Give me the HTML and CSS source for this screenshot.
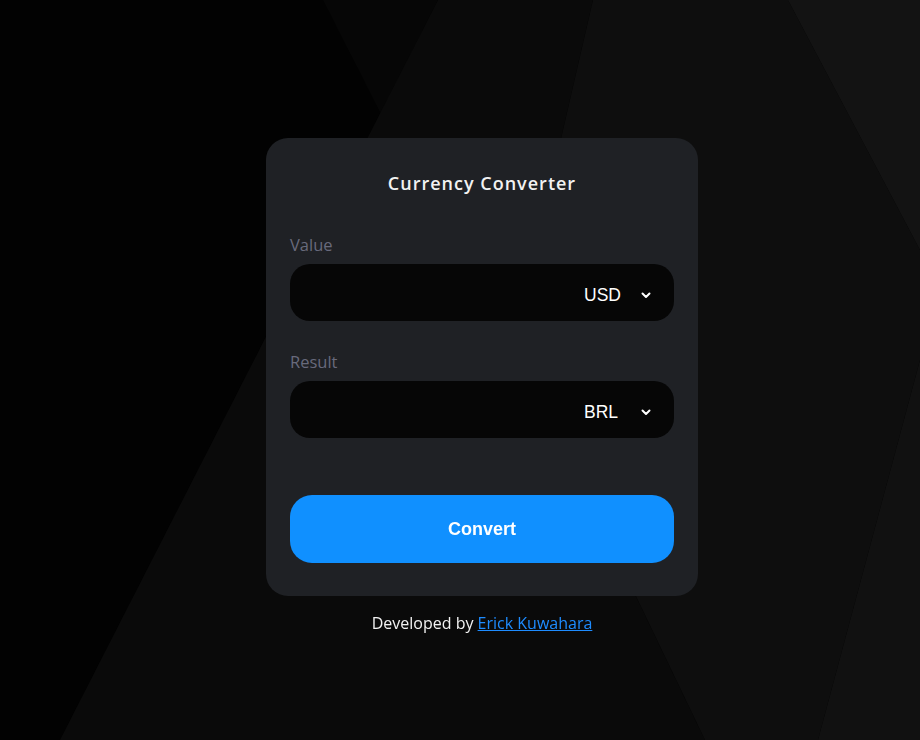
FILE: index.html
```html
<!DOCTYPE html>
<html lang="en">
<head>
<meta charset="utf-8">
<title>Currency Converter</title>
<link rel="stylesheet" href="styles.css">
</head>
<body>
<svg class="backdrop" width="920" height="740" viewBox="0 0 920 740" preserveAspectRatio="none" aria-hidden="true">
  <rect x="0" y="0" width="920" height="740" fill="#020202"/>
  <polygon points="323,0 438,0 381,114" fill="#060606"/>
  <polygon points="438,0 593,0 514,342 705,740 60,740" fill="#0a0a0a"/>
  <polygon points="593,0 788,0 920,250 920,360 818,740 705,740 514,342" fill="#0e0e0e"/>
  <polygon points="788,0 920,0 920,250" fill="#131313"/>
  <polygon points="920,360 920,740 818,740" fill="#111111"/>
</svg>
<main class="page">
  <form class="card">
    <h1 class="title">Currency Converter</h1>
    <label class="label">Value</label>
    <div class="field">
      <input class="amount" type="text">
      <span class="currency">USD</span>
      <svg class="chevron" width="10" height="7" viewBox="0 0 10 7"><path d="M1.5 1.5 L5 5 L8.5 1.5" fill="none" stroke="#fff" stroke-width="2" stroke-linecap="round" stroke-linejoin="round"/></svg>
    </div>
    <label class="label label-result">Result</label>
    <div class="field">
      <input class="amount" type="text">
      <span class="currency">BRL</span>
      <svg class="chevron" width="10" height="7" viewBox="0 0 10 7"><path d="M1.5 1.5 L5 5 L8.5 1.5" fill="none" stroke="#fff" stroke-width="2" stroke-linecap="round" stroke-linejoin="round"/></svg>
    </div>
    <button class="convert" type="button">Convert</button>
  </form>
  <p class="footer">Developed by <a href="#">Erick Kuwahara</a></p>
</main>
</body>
</html>
```

FILE: styles.css
```css
html, body {
  margin: 0;
  padding: 0;
  background: #020202;
}

body {
  width: 920px;
  height: 740px;
  overflow: hidden;
  font-family: "Open Sans", "Noto Sans", sans-serif;
}

.backdrop {
  position: fixed;
  left: 0;
  top: 0;
  z-index: 0;
}

.page {
  position: relative;
  z-index: 1;
  display: flex;
  flex-direction: column;
  align-items: center;
  padding: 138px 0 0 44px;
}

.card {
  width: 432px;
  box-sizing: border-box;
  background: #1f2125;
  border-radius: 22px;
  padding: 33px 24px 33px;
  display: flex;
  flex-direction: column;
}

.title {
  margin: 0;
  text-align: center;
  color: #f2f2f2;
  font-size: 18px;
  font-weight: 600;
  line-height: 24px;
  letter-spacing: 1px;
}

.label {
  margin-top: 40px;
  color: #686a7c;
  font-size: 16.5px;
  line-height: 20px;
}

.label-result {
  margin-top: 31px;
}

.field {
  margin-top: 9px;
  height: 57px;
  box-sizing: border-box;
  background: #060606;
  border-radius: 20px;
  display: flex;
  align-items: center;
  padding: 5px 23px 0 20px;
}

.amount {
  flex: 1;
  min-width: 0;
  background: transparent;
  border: none;
  outline: none;
  color: #fff;
  font-family: "Liberation Sans", Arial, sans-serif;
  font-size: 17px;
}

.currency {
  width: 38px;
  text-align: left;
  white-space: nowrap;
  color: #ffffff;
  font-family: "Liberation Sans", Arial, sans-serif;
  font-size: 17.5px;
  margin-right: 19px;
}

.chevron {
  display: block;
}

.convert {
  margin-top: 57px;
  height: 68px;
  border: none;
  border-radius: 22px;
  background: #1090ff;
  color: #ffffff;
  font-family: "Liberation Sans", Arial, sans-serif;
  font-weight: 700;
  font-size: 18px;
}

.footer {
  margin: 17px 0 0;
  color: #f2f2f2;
  font-size: 16px;
  line-height: 20px;
}

.footer a {
  color: #1e8cff;
  text-decoration: underline;
}
```
